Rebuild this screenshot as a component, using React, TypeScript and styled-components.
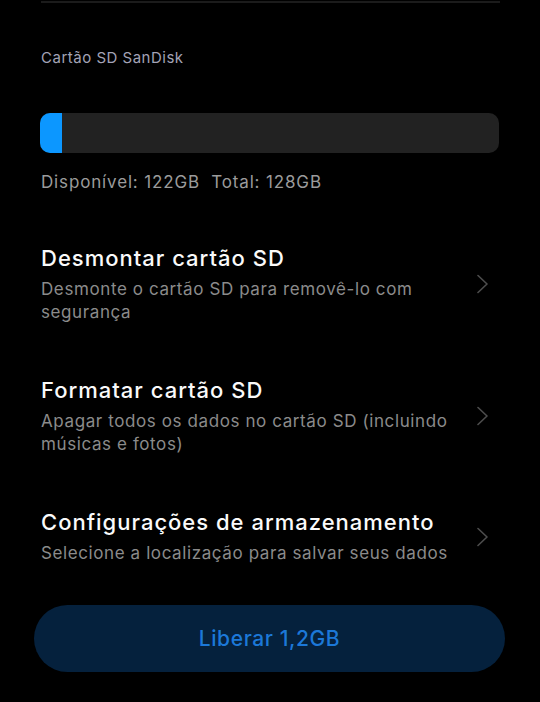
import React from "react";
import styled, { createGlobalStyle } from "styled-components";

const Global = createGlobalStyle`
  html, body { margin: 0; padding: 0; background: #000; }
  body { font-family: Inter, Roboto, "Noto Sans", "Liberation Sans", sans-serif; -webkit-font-smoothing: antialiased; }
`;

const Page = styled.div`
  width: 540px;
  height: 702px;
  background: #000;
  overflow: hidden;
  display: flex;
  flex-direction: column;
`;

const Section = styled.div`
  padding: 0 41px 0 41px;
  display: flex;
  flex-direction: column;
`;

const Divider = styled.div`
  margin-top: 1px;
  height: 2px;
  margin-right: -1px;
  background: #1b1b1b;
`;

const Label = styled.div`
  margin-top: 45px;
  font-size: 15px;
  line-height: 20px;
  letter-spacing: 0.5px;
  color: #a3a3b6;
`;

const Track = styled.div`
  margin-top: 45px;
  margin-left: -1px;
  height: 40px;
  border-radius: 10px;
  background: #222222;
  overflow: hidden;
  display: flex;
`;

const Fill = styled.div`
  height: 100%;
  background: #0c97ff;
`;

const Usage = styled.div`
  margin-top: 18px;
  font-size: 17px;
  line-height: 22px;
  letter-spacing: 0.85px;
  color: #9b9b9b;
  white-space: pre;
`;

const List = styled.div`
  margin-top: 25px;
  display: flex;
  flex-direction: column;
`;

const Row = styled.div`
  display: flex;
  align-items: center;
  padding: 26px 0;
`;

const Texts = styled.div`
  flex: 1;
  min-width: 0;
  display: flex;
  flex-direction: column;
  gap: 6px;
`;

const Title = styled.div`
  font-size: 22px;
  line-height: 28px;
  font-weight: 500;
  letter-spacing: 1px;
  color: #fafafa;
`;

const Subtitle = styled.div`
  font-size: 17px;
  line-height: 23px;
  letter-spacing: 0.6px;
  color: #8b8b8b;
`;

const Chevron = styled.svg`
  flex: none;
  width: 12px;
  height: 20px;
  margin-left: 16px;
  margin-right: 10px;
`;

const ActionButton = styled.button`
  margin: 14px 35px 0 34px;
  height: 67px;
  border: none;
  border-radius: 34px;
  background: #05213d;
  color: #1c78d8;
  font-family: Inter, Roboto, "Noto Sans", "Liberation Sans", sans-serif;
  font-size: 21px;
  font-weight: 500;
  letter-spacing: 0.6px;
  cursor: pointer;
`;

const rows = [
  {
    title: "Desmontar cartão SD",
    sub: "Desmonte o cartão SD para removê-lo com segurança",
  },
  {
    title: "Formatar cartão SD",
    sub: "Apagar todos os dados no cartão SD (incluindo músicas e fotos)",
  },
  {
    title: "Configurações de armazenamento",
    sub: "Selecione a localização para salvar seus dados",
  },
];

const available = 122;
const total = 128;

export default function App() {
  const usedPct = ((total - available) / total) * 100;
  return (
    <Page>
      <Global />
      <Section>
        <Divider />
        <Label>Cartão SD SanDisk</Label>
        <Track>
          <Fill style={{ width: `${usedPct}%` }} />
        </Track>
        <Usage>{`Disponível: ${available}GB  Total: ${total}GB`}</Usage>
        <List>
          {rows.map((r) => (
            <Row key={r.title}>
              <Texts>
                <Title>{r.title}</Title>
                <Subtitle>{r.sub}</Subtitle>
              </Texts>
              <Chevron viewBox="0 0 12 20">
                <polyline
                  points="1,1.5 10,10 1,18.5"
                  fill="none"
                  stroke="#4d4d4d"
                  strokeWidth="1.6"
                  strokeLinecap="round"
                  strokeLinejoin="round"
                />
              </Chevron>
            </Row>
          ))}
        </List>
      </Section>
      <ActionButton>Liberar 1,2GB</ActionButton>
    </Page>
  );
}
